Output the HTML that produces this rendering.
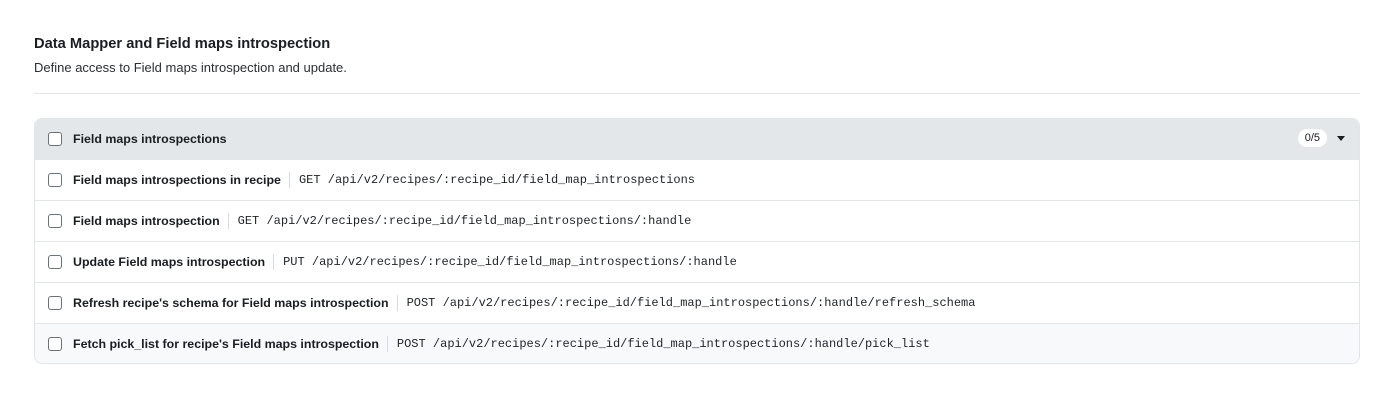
<!DOCTYPE html>
<html><head><meta charset="utf-8"><style>
*{box-sizing:border-box;margin:0;padding:0}
body{width:1393px;height:406px;background:#fff;font-family:"Liberation Sans",sans-serif;color:#1f2328;overflow:hidden}
h1{position:absolute;left:34px;top:36px;font-size:14.7px;font-weight:bold;color:#1a1d21}
.sub{position:absolute;left:34px;top:60px;font-size:13px;color:#2b2f33}
.hr{position:absolute;left:34px;top:93px;width:1326px;height:1px;background:#e3e6e9}
.box{position:absolute;left:34px;top:118px;width:1326px;height:246px;border:1px solid #e1e4e8;border-radius:8px;overflow:hidden}
.row{height:41px;display:flex;align-items:center;padding-left:13px;border-top:1px solid #e4e7ea;background:#fff;padding-bottom:1px}
.row.head{background:#e4e7ea;border-top:none;height:40px}
.row.last{background:#f8f9fb}
.cb{width:14px;height:14px;border:1.3px solid #6b7178;border-radius:3px;background:#fff;margin-right:11px;flex:none}
.lbl{font-size:12.4px;font-weight:bold;color:#1a1d21;white-space:nowrap}
.sep{width:1px;height:16px;background:#d6dade;margin:0 9px 0 8px}
.path{font-family:"Liberation Mono",monospace;font-size:12px;color:#1f2328;white-space:nowrap}
.badge{position:absolute;right:32px;top:10px;background:#fff;border-radius:10px;font-size:11px;padding:3px 7px;color:#1a1d21}
.arr{position:absolute;right:14px;top:17px;width:0;height:0;border-left:4px solid transparent;border-right:4px solid transparent;border-top:5px solid #1a1d21}
</style></head><body>
<h1>Data Mapper and Field maps introspection</h1>
<div class="sub">Define access to Field maps introspection and update.</div>
<div class="hr"></div>
<div class="box">
<div class="row head" style="position:relative"><div class="cb"></div><span class="lbl">Field maps introspections</span><span class="badge">0/5</span><span class="arr"></span></div>
<div class="row"><div class="cb"></div><span class="lbl">Field maps introspections in recipe</span><span class="sep"></span><span class="path">GET /api/v2/recipes/:recipe_id/field_map_introspections</span></div>
<div class="row"><div class="cb"></div><span class="lbl">Field maps introspection</span><span class="sep"></span><span class="path">GET /api/v2/recipes/:recipe_id/field_map_introspections/:handle</span></div>
<div class="row"><div class="cb"></div><span class="lbl">Update Field maps introspection</span><span class="sep"></span><span class="path">PUT /api/v2/recipes/:recipe_id/field_map_introspections/:handle</span></div>
<div class="row"><div class="cb"></div><span class="lbl">Refresh recipe's schema for Field maps introspection</span><span class="sep"></span><span class="path">POST /api/v2/recipes/:recipe_id/field_map_introspections/:handle/refresh_schema</span></div>
<div class="row last"><div class="cb"></div><span class="lbl">Fetch pick_list for recipe's Field maps introspection</span><span class="sep"></span><span class="path">POST /api/v2/recipes/:recipe_id/field_map_introspections/:handle/pick_list</span></div>
</div>
</body></html>
